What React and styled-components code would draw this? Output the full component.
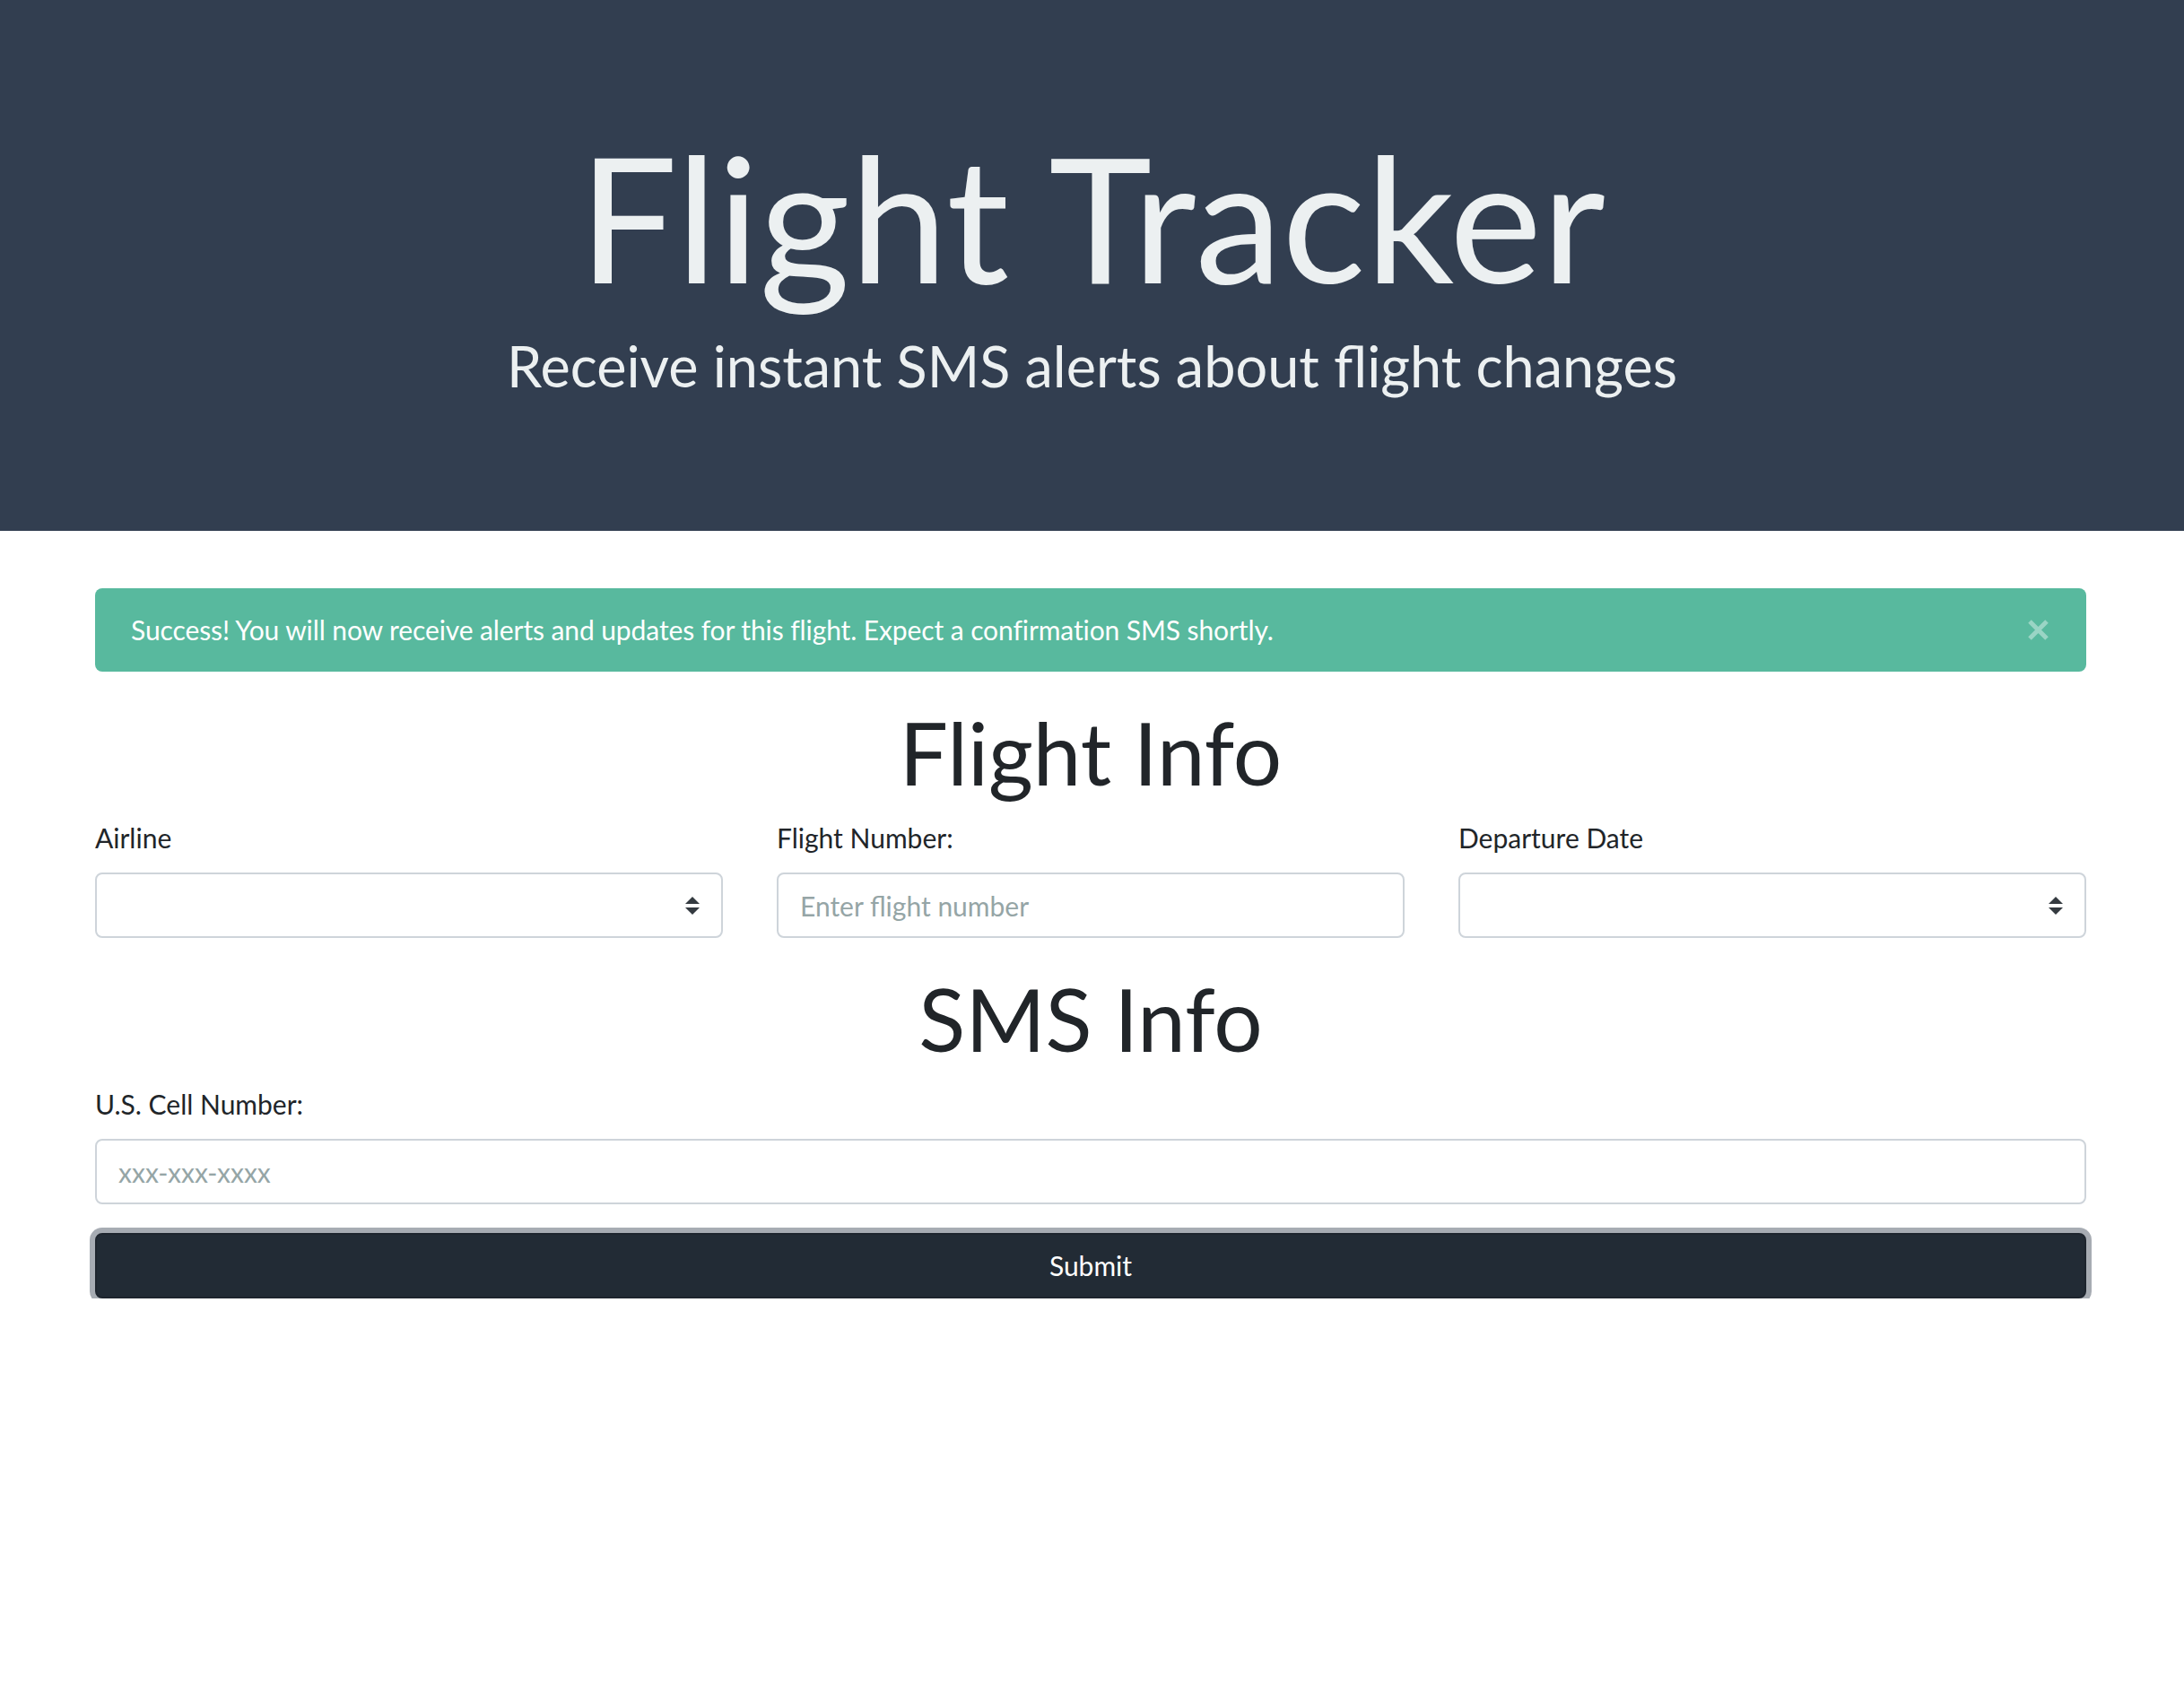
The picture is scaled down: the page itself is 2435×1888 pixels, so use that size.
import React from 'react'
import styled, { createGlobalStyle } from 'styled-components'

const GlobalStyle = createGlobalStyle`
  html, body {
    margin: 0;
    padding: 0;
    background: #fff;
  }
  body {
    font-family: Lato, "Open Sans", "Liberation Sans", sans-serif;
    color: #212529;
  }
  * {
    box-sizing: border-box;
  }
`

const Header = styled.header`
  background: #323e50;
  color: #ecf0f1;
  text-align: center;
  height: 592px;
  padding: 124px 30px 0;
`

const Title = styled.h1`
  font-size: 195px;
  font-weight: 400;
  line-height: 1.2;
  margin: 0 0 12px;
`

const Lead = styled.p`
  font-size: 63px;
  line-height: 1.2;
  margin: 0;
`

const Container = styled.main`
  max-width: 2223px;
  margin: 0 auto;
  padding: 64px 3px 0 0;
`

const Alert = styled.div`
  display: flex;
  align-items: center;
  justify-content: space-between;
  background: #58b99e;
  color: #fff;
  border-radius: 8px;
  padding: 24px 42px 24px 40px;
  font-size: 30px;
  line-height: 45px;
  letter-spacing: -0.1px;
  margin-bottom: 32px;
`

const CloseButton = styled.button`
  display: flex;
  align-items: center;
  justify-content: center;
  background: none;
  border: 0;
  padding: 0;
  cursor: pointer;
  color: rgba(255, 255, 255, 0.4);
`

const SectionTitle = styled.h2`
  font-size: 96px;
  font-weight: 400;
  line-height: 1.2;
  text-align: center;
  margin: 0 0 16px;
`

const Row = styled.div`
  display: grid;
  grid-template-columns: ${p => `repeat(${p.cols || 1}, 1fr)`};
  column-gap: 60px;
`

const FormGroup = styled.div`
  margin-bottom: 32px;
`

const Label = styled.label`
  display: block;
  font-size: 30px;
  line-height: 45px;
  margin-bottom: 16px;
`

const SelectWrap = styled.div`
  position: relative;

  svg {
    position: absolute;
    right: 26px;
    top: 50%;
    transform: translateY(-50%);
    pointer-events: none;
  }
`

const controlStyles = `
  display: block;
  width: 100%;
  height: 73px;
  border: 2px solid #ced4da;
  border-radius: 8px;
  padding: 12px 24px;
  font-family: Lato, "Open Sans", "Liberation Sans", sans-serif;
  font-size: 30px;
  line-height: 45px;
  color: #495057;
  background: #fff;
  outline: none;
`

const Select = styled.select`
  ${controlStyles}
  appearance: none;
  -webkit-appearance: none;
  padding-right: 60px;
`

const Input = styled.input`
  ${controlStyles}

  &::placeholder {
    color: #95a5a6;
    opacity: 1;
  }
`

const SubmitButton = styled.button`
  display: block;
  width: 100%;
  height: 73px;
  background: #222b35;
  border: 2px solid #1e252e;
  border-radius: 8px;
  color: #fff;
  font-family: Lato, "Open Sans", "Liberation Sans", sans-serif;
  font-size: 30px;
  line-height: 45px;
  box-shadow: 0 0 0 6px #a7acb3;
  cursor: pointer;
`

const Arrows = () => (
  <svg width="16" height="20" viewBox="0 0 4 5" fill="#343a40">
    <path d="M2 0L0 2h4zm0 5L0 3h4z" />
  </svg>
)

const CloseIcon = () => (
  <svg width="23" height="23" viewBox="0 0 23 23" stroke="currentColor" strokeWidth="5">
    <path d="M2 2L21 21M21 2L2 21" />
  </svg>
)

const SelectField = ({ label, id }) => (
  <FormGroup>
    <Label htmlFor={id}>{label}</Label>
    <SelectWrap>
      <Select id={id} defaultValue="">
        <option value="" />
      </Select>
      <Arrows />
    </SelectWrap>
  </FormGroup>
)

export default function App() {
  return (
    <>
      <GlobalStyle />
      <Header>
        <Title>Flight Tracker</Title>
        <Lead>Receive instant SMS alerts about flight changes</Lead>
      </Header>

      <Container>
        <Alert>
          <span>Success! You will now receive alerts and updates for this flight. Expect a confirmation SMS shortly.</span>
          <CloseButton aria-label="Close">
            <CloseIcon />
          </CloseButton>
        </Alert>

        <form onSubmit={e => e.preventDefault()}>
          <SectionTitle>Flight Info</SectionTitle>
          <Row cols={3}>
            <SelectField label="Airline" id="airline" />
            <FormGroup>
              <Label htmlFor="flight">Flight Number:</Label>
              <Input id="flight" placeholder="Enter flight number" />
            </FormGroup>
            <SelectField label="Departure Date" id="date" />
          </Row>

          <SectionTitle>SMS Info</SectionTitle>
          <FormGroup>
            <Label htmlFor="phone">U.S. Cell Number:</Label>
            <Input id="phone" placeholder="xxx-xxx-xxxx" />
          </FormGroup>

          <SubmitButton type="submit">Submit</SubmitButton>
        </form>
      </Container>
    </>
  )
}
